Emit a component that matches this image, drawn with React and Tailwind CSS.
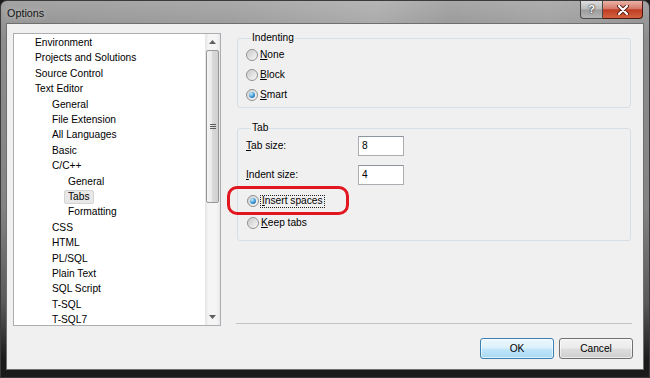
import React from 'react';

const font = "font-['Segoe_UI','Liberation_Sans',Arial,sans-serif] text-[10.2px]";

const treeItems = [
  { label: 'Environment', level: 0 },
  { label: 'Projects and Solutions', level: 0 },
  { label: 'Source Control', level: 0 },
  { label: 'Text Editor', level: 0 },
  { label: 'General', level: 1 },
  { label: 'File Extension', level: 1 },
  { label: 'All Languages', level: 1 },
  { label: 'Basic', level: 1 },
  { label: 'C/C++', level: 1 },
  { label: 'General', level: 2 },
  { label: 'Tabs', level: 2, selected: true },
  { label: 'Formatting', level: 2 },
  { label: 'CSS', level: 1 },
  { label: 'HTML', level: 1 },
  { label: 'PL/SQL', level: 1 },
  { label: 'Plain Text', level: 1 },
  { label: 'SQL Script', level: 1 },
  { label: 'T-SQL', level: 1 },
  { label: 'T-SQL7', level: 1 },
];

const indent = ['pl-[21px]', 'pl-[38px]', 'pl-[54px]'];

function Radio({ checked }) {
  return (
    <span className="w-[12px] h-[12px] shrink-0 rounded-full border border-[#8e8f8f] bg-[linear-gradient(135deg,#d2d2d2,#f8f8f8)] flex items-center justify-center">
      {checked ? (
        <span className="w-[6px] h-[6px] rounded-full bg-[radial-gradient(circle_at_35%_30%,#c4efff_0%,#3b94d4_55%,#0d4b8a_100%)]" />
      ) : (
        <span className="w-[8px] h-[8px] rounded-full bg-[linear-gradient(135deg,#cccccc,#f4f4f4)]" />
      )}
    </span>
  );
}

function Key({ children }) {
  return <span className="underline underline-offset-[1px]">{children}</span>;
}

function Arrow({ down }) {
  return (
    <svg width="7" height="4" viewBox="0 0 7 4">
      <path d={down ? 'M0 0 L7 0 L3.5 4 Z' : 'M0 4 L3.5 0 L7 4 Z'} fill="#606060" />
    </svg>
  );
}

function Tree() {
  return (
    <div className="mt-[2px] w-[208px] h-[293px] flex bg-white border border-[#abadb3] overflow-hidden">
      <div className="flex-1 pt-[1px]">
        {treeItems.map((item, i) => (
          <div key={i} className={`h-[15.4px] flex items-center ${indent[item.level]}`}>
            {item.selected ? (
              <span className="-ml-[4px] px-[3px] h-[14px] flex items-center border border-[#d4d4d4] rounded-[2px] bg-[#e8e8e8]">
                {item.label}
              </span>
            ) : (
              <span className="whitespace-nowrap">{item.label}</span>
            )}
          </div>
        ))}
      </div>
      <div className="w-[15px] flex flex-col bg-[linear-gradient(to_right,#e4e4e4,#f5f5f5_25%,#f5f5f5_75%,#e8e8e8)]">
        <div className="h-[16px] flex items-center justify-center">
          <Arrow />
        </div>
        <div className="h-[153px] mx-[1px] rounded-[2px] border border-[#979797] bg-[linear-gradient(to_right,#f4f4f4,#e9e9e9_50%,#d9d9d9_50%,#d0d0d0)] flex items-center justify-center">
          <svg width="6" height="7" viewBox="0 0 6 7">
            <path d="M0 1.5 H6 M0 3.5 H6 M0 5.5 H6" stroke="#5c5c5c" strokeWidth="1" />
          </svg>
        </div>
        <div className="flex-1" />
        <div className="h-[16px] flex items-center justify-center">
          <Arrow down />
        </div>
      </div>
    </div>
  );
}

function TextBox({ value }) {
  return (
    <div className="w-[46px] h-[20px] bg-white border border-[#abadb3] border-t-[#8e95a0] flex items-center pl-[3px]">
      {value}
    </div>
  );
}

export default function App() {
  return (
    <div className={`relative w-[650px] h-[378px] overflow-hidden bg-[#1c1c1c] text-black ${font}`}>
      <div className="w-full h-full flex flex-col rounded-t-[7px] border border-[#3b3b3b] px-[5px] pb-[7px] bg-[linear-gradient(to_bottom,#a3a3a3_0%,#8d8d8d_10%,#838383_55%,#5a5a5a_80%,#1a1a1a_96%)]">
        {/* title bar */}
        <div className="h-[22px] flex items-start bg-[linear-gradient(to_right,rgba(255,255,255,0)_0%,rgba(255,255,255,0.08)_35%,rgba(255,255,255,0.2)_58%,rgba(255,255,255,0.05)_70%,rgba(255,255,255,0.12)_85%,rgba(255,255,255,0)_100%)]">
          <div className="pl-[1px] pt-[2px] h-full flex items-center text-[10.8px] text-[#141414] [text-shadow:0_0_6px_rgba(255,255,255,0.7)]">
            Options
          </div>
          <div className="ml-auto mr-[1px] flex">
            <div className="w-[23px] h-[18px] rounded-bl-[4px] border border-[#4a4a4a] border-t-0 bg-[linear-gradient(to_bottom,#dedede_0%,#b9b9b9_48%,#9c9c9c_52%,#b5b5b5_100%)] flex items-center justify-center font-bold text-[11px] text-white [text-shadow:0_0_2px_#222,0_0_1px_#222]">
              ?
            </div>
            <div className="w-[40px] h-[18px] rounded-br-[4px] border border-[#4a1810] border-t-0 border-l-0 bg-[linear-gradient(to_bottom,#eab3a6_0%,#d5796a_45%,#c23c24_52%,#d2623f_100%)] flex items-center justify-center">
              <svg width="12" height="10" viewBox="0 0 12 10">
                <path d="M2 1 L10 9 M10 1 L2 9" stroke="#5a1a10" strokeWidth="4" strokeLinecap="round" />
                <path d="M2 1 L10 9 M10 1 L2 9" stroke="#ffffff" strokeWidth="2.2" strokeLinecap="round" />
              </svg>
            </div>
          </div>
        </div>

        {/* client area */}
        <div className="flex-1 flex flex-col bg-[#f0f0f0] border border-[#6f6f6f]">
          <div className="flex pl-[6px] pt-[7px]">
            <Tree />
            <div className="ml-[16px] w-[394px] flex flex-col">
              <fieldset className="border border-[#d5dfe5] rounded-[3px] pl-[8px] pb-[2px]">
                <legend className="ml-[5px] px-[1px] leading-[14px]">Indenting</legend>
                <div className="h-[20px] flex items-center gap-[2px]">
                  <Radio />
                  <span><Key>N</Key>one</span>
                </div>
                <div className="h-[20px] flex items-center gap-[2px]">
                  <Radio />
                  <span><Key>B</Key>lock</span>
                </div>
                <div className="h-[20px] flex items-center gap-[2px]">
                  <Radio checked />
                  <span><Key>S</Key>mart</span>
                </div>
              </fieldset>

              <fieldset className="mt-[13px] border border-[#d5dfe5] rounded-[3px] pl-[8px] pb-[7px]">
                <legend className="ml-[5px] px-[1px] leading-[14px]">Tab</legend>
                <div className="mt-[1px] flex items-center">
                  <span className="w-[112px]"><Key>T</Key>ab size:</span>
                  <TextBox value="8" />
                </div>
                <div className="mt-[9px] flex items-center">
                  <span className="w-[112px]"><Key>I</Key>ndent size:</span>
                  <TextBox value="4" />
                </div>
                <div className="mt-[6px] ml-[1px] h-[20px] flex items-center gap-[1px]">
                  <Radio checked />
                  <span className="h-[13px] flex items-center px-[1px] border border-dotted border-[#222]">
                    <span><Key>I</Key>nsert spaces</span>
                  </span>
                </div>
                <div className="mt-[2px] ml-[1px] h-[20px] flex items-center gap-[2px]">
                  <Radio />
                  <span><Key>K</Key>eep tabs</span>
                </div>
              </fieldset>

              <div className="mt-[82px] -mx-[1px] border-t border-[#c4c4c4]" />
            </div>
          </div>

          <div className="mt-[12px] pr-[10px] flex justify-end gap-[5px]">
            <button className="w-[74px] h-[21px] rounded-[3px] border border-[#3c7fb1] bg-[linear-gradient(to_bottom,#ecf7fd_0%,#dcf1fc_48%,#c1e6fc_52%,#aad9f3_100%)] shadow-[inset_0_0_0_1px_rgba(255,255,255,0.6)]">
              OK
            </button>
            <button className="w-[74px] h-[21px] rounded-[3px] border border-[#707070] bg-[linear-gradient(to_bottom,#f3f3f3_0%,#ebebeb_48%,#dddddd_52%,#cfcfcf_100%)] shadow-[inset_0_0_0_1px_rgba(255,255,255,0.6)]">
              Cancel
            </button>
          </div>
        </div>
      </div>

      {/* red annotation */}
      <div className="absolute left-[227px] top-[186px] w-[122px] h-[29px] border-[3px] border-[#e2161e] rounded-[10px]" />
    </div>
  );
}
